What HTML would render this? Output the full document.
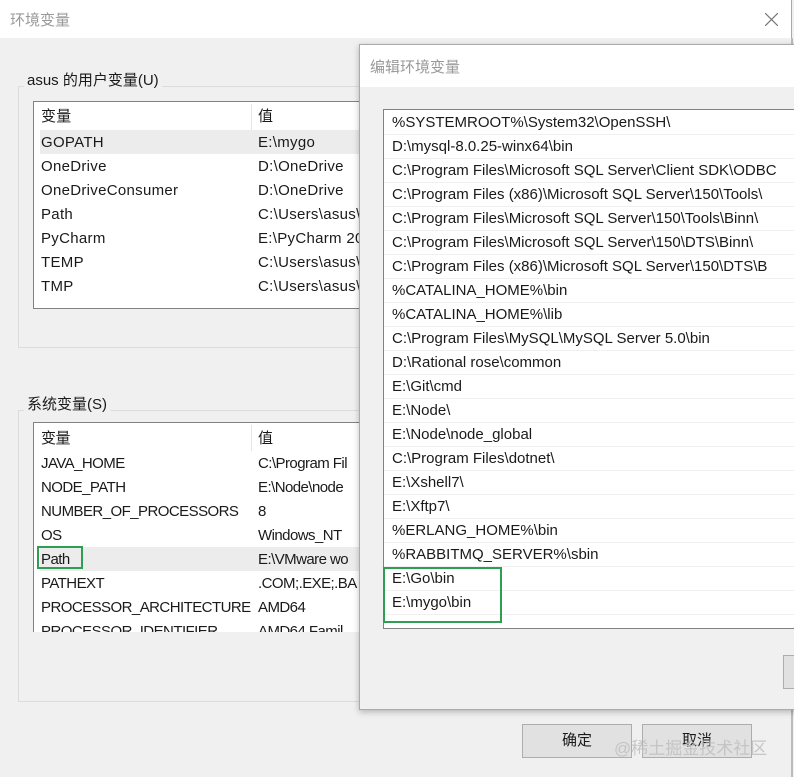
<!DOCTYPE html>
<html><head><meta charset="utf-8"><style>
*{margin:0;padding:0;box-sizing:border-box}
body{width:794px;height:777px;overflow:hidden;background:#f0f0f0;font-family:"Liberation Sans","Noto Sans CJK SC",sans-serif;font-size:15px;color:#1a1a1a;position:relative}
.a{position:absolute;white-space:nowrap}
.row{position:absolute;height:24px;line-height:24px;white-space:nowrap}
.gb{position:absolute;border:1px solid #dcdcdc}
.lb{position:absolute;background:#fff;border:1px solid #828282;overflow:hidden}
.er{position:absolute;left:0;width:420px;height:24px;line-height:24px;border-bottom:1px solid #f0f0f0;padding-left:8px;white-space:nowrap}
.btn{position:absolute;background:#e1e1e1;border:1px solid #adadad;text-align:center;line-height:32px}
.sys .row{letter-spacing:-0.55px}
.u .row{letter-spacing:0.3px}
</style></head><body>
<div class="a" style="left:0;top:0;width:792px;height:38px;background:#fff;border-right:1px solid #aaa"></div>
<div class="a" style="left:10px;top:9px;color:#999;font-size:15px">环境变量</div>
<svg class="a" style="left:765px;top:13px" width="13" height="13"><path d="M0 0L13 13M13 0L0 13" stroke="#777" stroke-width="1.2"/></svg>
<div class="a" style="left:791px;top:38px;width:2px;height:739px;background:#bbb"></div>

<div class="gb" style="left:18px;top:86px;width:400px;height:262px"></div>
<div class="a" style="left:24px;top:69px;background:#f0f0f0;padding:0 3px">asus 的用户变量(U)</div>
<div class="lb u" style="left:33px;top:101px;width:340px;height:208px">
<div class="row" style="left:7px;top:3px">变量</div><div class="row" style="left:224px;top:3px">值</div>
<div class="a" style="left:217px;top:2px;width:1px;height:26px;background:#e5e5e5"></div>
<div class="a" style="left:6px;top:28px;width:340px;height:24px;background:#ececec"></div>
<div class="row" style="left:7px;top:29px">GOPATH</div><div class="row" style="left:224px;top:29px">E:\mygo</div>
<div class="row" style="left:7px;top:53px">OneDrive</div><div class="row" style="left:224px;top:53px">D:\OneDrive</div>
<div class="row" style="left:7px;top:77px">OneDriveConsumer</div><div class="row" style="left:224px;top:77px">D:\OneDrive</div>
<div class="row" style="left:7px;top:101px">Path</div><div class="row" style="left:224px;top:101px">C:\Users\asus\</div>
<div class="row" style="left:7px;top:125px">PyCharm</div><div class="row" style="left:224px;top:125px">E:\PyCharm 20</div>
<div class="row" style="left:7px;top:149px">TEMP</div><div class="row" style="left:224px;top:149px">C:\Users\asus\</div>
<div class="row" style="left:7px;top:173px">TMP</div><div class="row" style="left:224px;top:173px">C:\Users\asus\</div>
</div>

<div class="gb" style="left:18px;top:410px;width:400px;height:292px"></div>
<div class="a" style="left:24px;top:393px;background:#f0f0f0;padding:0 3px">系统变量(S)</div>
<div class="lb sys" style="left:33px;top:422px;width:340px;height:210px;border-bottom:none">
<div class="row" style="left:7px;top:4px">变量</div><div class="row" style="left:224px;top:4px">值</div>
<div class="a" style="left:217px;top:2px;width:1px;height:26px;background:#e5e5e5"></div>
<div class="row" style="left:7px;top:29px">JAVA_HOME</div><div class="row" style="left:224px;top:29px">C:\Program Fil</div>
<div class="row" style="left:7px;top:53px">NODE_PATH</div><div class="row" style="left:224px;top:53px">E:\Node\node</div>
<div class="row" style="left:7px;top:77px">NUMBER_OF_PROCESSORS</div><div class="row" style="left:224px;top:77px">8</div>
<div class="row" style="left:7px;top:101px">OS</div><div class="row" style="left:224px;top:101px">Windows_NT</div>
<div class="a" style="left:6px;top:124px;width:340px;height:24px;background:#ececec"></div>
<div class="row" style="left:7px;top:125px">Path</div><div class="row" style="left:224px;top:125px">E:\VMware wo</div>
<div class="row" style="left:7px;top:149px">PATHEXT</div><div class="row" style="left:224px;top:149px">.COM;.EXE;.BA</div>
<div class="row" style="left:7px;top:173px">PROCESSOR_ARCHITECTURE</div><div class="row" style="left:224px;top:173px">AMD64</div>
<div class="row" style="left:7px;top:197px">PROCESSOR_IDENTIFIER</div><div class="row" style="left:224px;top:197px">AMD64 Famil</div>
</div>
<div class="a" style="left:37px;top:546px;width:46px;height:23px;border:2px solid #2e9e52"></div>

<div class="a" style="left:359px;top:44px;width:440px;height:666px;background:#f0f0f0;border:1px solid #aaa;box-shadow:0 2px 6px rgba(0,0,0,.25)"></div>
<div class="a" style="left:360px;top:45px;width:434px;height:42px;background:#fff"></div>
<div class="a" style="left:370px;top:56px;color:#999;font-size:15px">编辑环境变量</div>
<div class="lb" style="left:383px;top:109px;width:420px;height:520px">
<div class="er" style="top:1px">%SYSTEMROOT%\System32\OpenSSH\</div>
<div class="er" style="top:25px">D:\mysql-8.0.25-winx64\bin</div>
<div class="er" style="top:49px">C:\Program Files\Microsoft SQL Server\Client SDK\ODBC</div>
<div class="er" style="top:73px">C:\Program Files (x86)\Microsoft SQL Server\150\Tools\</div>
<div class="er" style="top:97px">C:\Program Files\Microsoft SQL Server\150\Tools\Binn\</div>
<div class="er" style="top:121px">C:\Program Files\Microsoft SQL Server\150\DTS\Binn\</div>
<div class="er" style="top:145px">C:\Program Files (x86)\Microsoft SQL Server\150\DTS\B</div>
<div class="er" style="top:169px">%CATALINA_HOME%\bin</div>
<div class="er" style="top:193px">%CATALINA_HOME%\lib</div>
<div class="er" style="top:217px">C:\Program Files\MySQL\MySQL Server 5.0\bin</div>
<div class="er" style="top:241px">D:\Rational rose\common</div>
<div class="er" style="top:265px">E:\Git\cmd</div>
<div class="er" style="top:289px">E:\Node\</div>
<div class="er" style="top:313px">E:\Node\node_global</div>
<div class="er" style="top:337px">C:\Program Files\dotnet\</div>
<div class="er" style="top:361px">E:\Xshell7\</div>
<div class="er" style="top:385px">E:\Xftp7\</div>
<div class="er" style="top:409px">%ERLANG_HOME%\bin</div>
<div class="er" style="top:433px">%RABBITMQ_SERVER%\sbin</div>
<div class="er" style="top:457px">E:\Go\bin</div>
<div class="er" style="top:481px">E:\mygo\bin</div>
<div class="er" style="top:505px"></div>
</div>
<div class="a" style="left:383px;top:567px;width:119px;height:56px;border:2px solid #2e9e52"></div>
<div class="a" style="left:783px;top:655px;width:20px;height:34px;background:#e1e1e1;border:1px solid #adadad"></div>

<div class="btn" style="left:522px;top:724px;width:110px;height:34px">确定</div>
<div class="btn" style="left:642px;top:724px;width:110px;height:34px">取消</div>
<div class="a" style="left:614px;top:734px;color:rgba(190,190,190,.85);font-size:17px">@稀土掘金技术社区</div>
</body></html>
